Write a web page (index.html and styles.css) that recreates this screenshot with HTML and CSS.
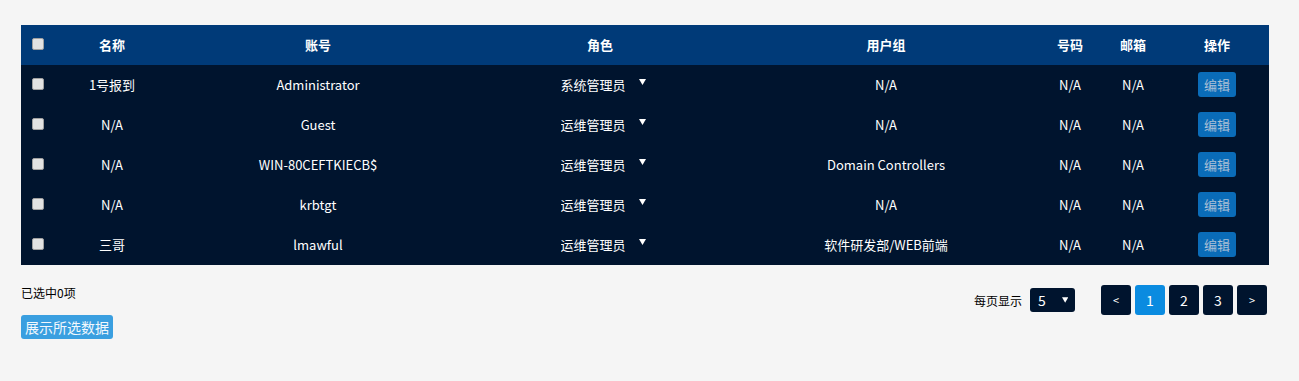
FILE: index.html
```html
<!DOCTYPE html>
<html>
<head>
    <meta charset="utf-8">
    <title>用户管理</title>
    <link rel="stylesheet" href="styles.css">
</head>
<body>
    <div class="user-panel">
        <table class="user-table">
            <colgroup>
                <col class="col-check">
                <col class="col-name">
                <col class="col-account">
                <col class="col-role">
                <col class="col-group">
                <col class="col-phone">
                <col class="col-mail">
                <col class="col-action">
            </colgroup>
            <thead>
                <tr>
                    <th class="check-cell"><input type="checkbox" class="row-check" id="checkAll"></th>
                    <th>名称</th>
                    <th>账号</th>
                    <th>角色</th>
                    <th>用户组</th>
                    <th>号码</th>
                    <th>邮箱</th>
                    <th>操作</th>
                </tr>
            </thead>
            <tbody>
                <tr>
                    <td class="check-cell"><input type="checkbox" class="row-check"></td>
                    <td>1号报到</td>
                    <td>Administrator</td>
                    <td>
                        <div class="role-select">
                            <select><option>系统管理员</option><option>运维管理员</option></select>
                            <svg class="caret" width="7" height="6" viewBox="0 0 7 6"><path d="M0 0h7L3.5 6z" fill="#fff"/></svg>
                        </div>
                    </td>
                    <td>N/A</td>
                    <td>N/A</td>
                    <td>N/A</td>
                    <td><button class="edit-button">编辑</button></td>
                </tr>
                <tr>
                    <td class="check-cell"><input type="checkbox" class="row-check"></td>
                    <td>N/A</td>
                    <td>Guest</td>
                    <td>
                        <div class="role-select">
                            <select><option>运维管理员</option><option>系统管理员</option></select>
                            <svg class="caret" width="7" height="6" viewBox="0 0 7 6"><path d="M0 0h7L3.5 6z" fill="#fff"/></svg>
                        </div>
                    </td>
                    <td>N/A</td>
                    <td>N/A</td>
                    <td>N/A</td>
                    <td><button class="edit-button">编辑</button></td>
                </tr>
                <tr>
                    <td class="check-cell"><input type="checkbox" class="row-check"></td>
                    <td>N/A</td>
                    <td>WIN-80CEFTKIECB$</td>
                    <td>
                        <div class="role-select">
                            <select><option>运维管理员</option><option>系统管理员</option></select>
                            <svg class="caret" width="7" height="6" viewBox="0 0 7 6"><path d="M0 0h7L3.5 6z" fill="#fff"/></svg>
                        </div>
                    </td>
                    <td>Domain Controllers</td>
                    <td>N/A</td>
                    <td>N/A</td>
                    <td><button class="edit-button">编辑</button></td>
                </tr>
                <tr>
                    <td class="check-cell"><input type="checkbox" class="row-check"></td>
                    <td>N/A</td>
                    <td>krbtgt</td>
                    <td>
                        <div class="role-select">
                            <select><option>运维管理员</option><option>系统管理员</option></select>
                            <svg class="caret" width="7" height="6" viewBox="0 0 7 6"><path d="M0 0h7L3.5 6z" fill="#fff"/></svg>
                        </div>
                    </td>
                    <td>N/A</td>
                    <td>N/A</td>
                    <td>N/A</td>
                    <td><button class="edit-button">编辑</button></td>
                </tr>
                <tr>
                    <td class="check-cell"><input type="checkbox" class="row-check"></td>
                    <td>三哥</td>
                    <td>lmawful</td>
                    <td>
                        <div class="role-select">
                            <select><option>运维管理员</option><option>系统管理员</option></select>
                            <svg class="caret" width="7" height="6" viewBox="0 0 7 6"><path d="M0 0h7L3.5 6z" fill="#fff"/></svg>
                        </div>
                    </td>
                    <td>软件研发部/WEB前端</td>
                    <td>N/A</td>
                    <td>N/A</td>
                    <td><button class="edit-button">编辑</button></td>
                </tr>
            </tbody>
        </table>

        <div class="table-footer">
            <div class="selection-info">
                <div class="selected-count">已选中<span id="selectedCount">0</span>项</div>
                <button class="show-button" onclick="showSelected()">展示所选数据</button>
            </div>
            <div class="pager">
                <span class="page-size-label">每页显示</span>
                <div class="page-size">
                    <select><option>5</option><option>10</option><option>20</option></select>
                    <svg class="caret" width="7" height="6" viewBox="0 0 7 6"><path d="M0 0h7L3.5 6z" fill="#fff"/></svg>
                </div>
                <div class="page-buttons">
                    <button class="page-button small">&lt;</button>
                    <button class="page-button active">1</button>
                    <button class="page-button">2</button>
                    <button class="page-button">3</button>
                    <button class="page-button small">&gt;</button>
                </div>
            </div>
        </div>
    </div>

    <script>
        const checks = document.querySelectorAll('tbody .row-check');

        function updateCount() {
            let n = 0;
            checks.forEach(c => { if (c.checked) n++; });
            document.getElementById('selectedCount').textContent = n;
        }

        checks.forEach(c => c.addEventListener('change', updateCount));

        document.getElementById('checkAll').addEventListener('change', function () {
            checks.forEach(c => { c.checked = this.checked; });
            updateCount();
        });

        function showSelected() {
            const rows = [];
            checks.forEach(c => {
                if (c.checked) rows.push(c.closest('tr').children[2].textContent);
            });
            console.log(rows);
        }
    </script>
</body>
</html>
```

FILE: styles.css
```css
body {
    margin: 0;
    background: #f5f5f5;
    font-family: "Noto Sans CJK SC", "Noto Sans", sans-serif;
    font-size: 13px;
    color: #000;
}

.user-panel {
    padding: 25px 30px 0 21px;
}

.user-table {
    width: 1248px;
    border-collapse: collapse;
    table-layout: fixed;
    color: #fff;
}

.col-check { width: 34px; }
.col-name { width: 114px; }
.col-account { width: 298px; }
.col-role { width: 266px; }
.col-group { width: 306px; }
.col-phone { width: 62px; }
.col-mail { width: 64px; }
.col-action { width: 104px; }

.user-table th,
.user-table td {
    height: 40px;
    padding: 0;
    text-align: center;
    vertical-align: middle;
    line-height: 16px;
}

.user-table thead tr {
    background: #003a78;
}

.user-table th {
    font-weight: bold;
}

.user-table tbody tr {
    background: #00142e;
}

.check-cell {
    text-align: center;
}

.row-check {
    appearance: none;
    display: block;
    width: 12px;
    height: 12px;
    margin: -3px 0 0 11px;
    background: #e2e2e2;
    border: 1px solid #a0a0a0;
    border-radius: 2px;
    cursor: pointer;
}

.row-check:checked {
    background: #3a9fe0;
}

.role-select {
    display: inline-flex;
    align-items: center;
    margin-left: 6px;
}

.role-select select,
.page-size select {
    appearance: none;
    background: transparent;
    border: none;
    color: #fff;
    font-family: inherit;
    font-size: 13px;
    padding: 0;
    outline: none;
}

.role-select select {
    width: 78px;
    margin-top: -4px;
}

.role-select .caret {
    margin-top: -9px;
}

.role-select option,
.page-size option {
    color: #000;
}

.edit-button {
    width: 38px;
    height: 25px;
    margin: -2px 0 0 0;
    border: none;
    border-radius: 3px;
    background: #0a6cb8;
    color: #a9bfd6;
    font-family: inherit;
    font-size: 13px;
    padding: 0;
    cursor: pointer;
}

.table-footer {
    display: flex;
    justify-content: space-between;
    width: 1246px;
    margin-top: 20px;
}

.selected-count {
    font-size: 12px;
    line-height: 16px;
}

.show-button {
    margin-top: 14px;
    height: 24px;
    padding: 0 4px;
    border: none;
    border-radius: 3px;
    background: #3a9fe0;
    color: #f2f8fd;
    font-family: inherit;
    font-size: 14px;
    cursor: pointer;
}

.pager {
    display: flex;
    align-items: center;
    height: 30px;
}

.page-size-label {
    font-size: 12px;
    margin-right: 8px;
}

.page-size {
    display: flex;
    align-items: center;
    width: 45px;
    height: 24px;
    box-sizing: border-box;
    padding: 0 7px 0 8px;
    background: #00142e;
    border-radius: 3px;
}

.page-size select {
    width: 24px;
    font-size: 14px;
}

.page-size .caret {
    margin-left: 2px;
}

.page-buttons {
    display: flex;
    gap: 4px;
    margin-left: 26px;
}

.page-button {
    width: 30px;
    height: 30px;
    border: none;
    border-radius: 3px;
    background: #00142e;
    color: #fff;
    font-family: inherit;
    font-size: 14px;
    padding: 0;
    cursor: pointer;
}

.page-button.small {
    font-size: 11px;
}

.page-button.active {
    background: #0a8be0;
}
```
